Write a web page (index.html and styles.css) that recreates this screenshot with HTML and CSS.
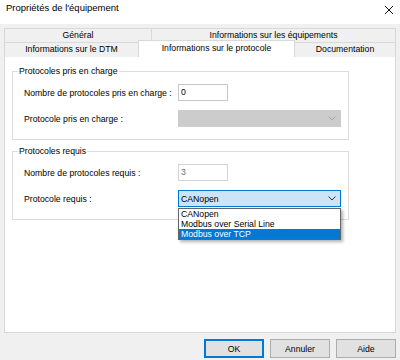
FILE: index.html
```
<!DOCTYPE html>
<html lang="fr">

<head>
  <meta charset="UTF-8">
  <meta name="viewport" content="width=device-width, initial-scale=1.0">
  <title>Propriétés de l'équipement</title>
  <link rel="stylesheet" href="styles.css">
</head>

<body>
  <div class="window">
    <div class="titlebar">
      <span class="title">Propriétés de l'équipement</span>
      <svg class="close" width="10" height="10" viewBox="0 0 10 10">
        <path d="M1 1L9 9M9 1L1 9" stroke="#111" stroke-width="1" fill="none" />
      </svg>
    </div>

    <div class="client">
      <div class="tabs">
        <div class="tab-row row-back">
          <div class="tab">Général</div>
          <div class="tab">Informations sur les équipements</div>
        </div>
        <div class="tab-row row-front">
          <div class="tab">Informations sur le DTM</div>
          <div class="tab active">Informations sur le protocole</div>
          <div class="tab">Documentation</div>
        </div>
      </div>

      <div class="panel">
        <fieldset class="group">
          <legend>Protocoles pris en charge</legend>
          <div class="field">
            <label>Nombre de protocoles pris en charge :</label>
            <div class="textbox">0</div>
          </div>
          <div class="field">
            <label>Protocole pris en charge :</label>
            <div class="combo disabled">
              <span></span>
              <svg class="chevron" width="8" height="5" viewBox="0 0 8 5">
                <polyline points="0.5,0.5 4,4 7.5,0.5" fill="none" stroke="#a6a6a6" stroke-width="1" />
              </svg>
            </div>
          </div>
        </fieldset>

        <fieldset class="group">
          <legend>Protocoles requis</legend>
          <div class="field">
            <label>Nombre de protocoles requis :</label>
            <div class="textbox readonly">3</div>
          </div>
          <div class="field">
            <label>Protocole requis :</label>
            <div class="combo-wrap">
              <div class="combo open">
                <span>CANopen</span>
                <svg class="chevron" width="8" height="5" viewBox="0 0 8 5">
                  <polyline points="0.5,0.5 4,4 7.5,0.5" fill="none" stroke="#333" stroke-width="1" />
                </svg>
              </div>
              <ul class="dropdown">
                <li>CANopen</li>
                <li>Modbus over Serial Line</li>
                <li class="selected">Modbus over TCP</li>
              </ul>
            </div>
          </div>
        </fieldset>
      </div>

      <div class="buttons">
        <button class="btn default">OK</button>
        <button class="btn">Annuler</button>
        <button class="btn">Aide</button>
      </div>
    </div>
  </div>
</body>

</html>
```

FILE: styles.css
```
* {
  box-sizing: border-box;
}

body {
  margin: 0;
  font-family: 'Liberation Sans', Arial, sans-serif;
  font-size: 8.7px;
  color: #000;
  background: #f0f0f0;
}

.window {
  width: 400px;
  height: 360px;
  background: #f0f0f0;
  overflow: hidden;
}

.titlebar {
  height: 24px;
  background: #fff;
  display: flex;
  justify-content: space-between;
  align-items: flex-start;
  padding: 2px 6px 0 6px;
}

.title {
  font-size: 9.5px;
  line-height: 12px;
}

.close {
  margin-top: 3px;
}

.client {
  padding: 4px 4px 0;
}

.tab-row {
  display: grid;
  height: 14px;
}

.row-back {
  grid-template-columns: 148px 1fr;
}

.row-front {
  grid-template-columns: 135px 156px 1fr;
}

.tab {
  border: 1px solid #d9d9d9;
  border-width: 1px 1px 0 0;
  background: #f0f0f0;
  text-align: center;
  line-height: 13px;
  white-space: nowrap;
}

.tab:first-child {
  border-left-width: 1px;
}

.tab.active {
  position: relative;
  z-index: 1;
  background: #fff;
  border-left-width: 1px;
  margin-left: -1px;
  margin-top: -2px;
  height: 17px;
  padding-top: 1px;
}

.panel {
  background: #fff;
  border: 1px solid #d9d9d9;
  height: 277px;
  padding: 9px 0 0 7px;
}

.group {
  width: 337px;
  margin: 0;
  border: 1px solid #dcdcdc;
  padding: 7px 5px 12px;
}

.group + .group {
  margin-top: 6px;
}

.group legend {
  padding: 0 1px;
  line-height: 11px;
}

.field {
  display: grid;
  grid-template-columns: 160px auto;
  align-items: center;
  height: 17px;
}

.field + .field {
  margin-top: 9px;
}

.field label {
  padding-left: 6px;
}

.textbox {
  width: 50px;
  height: 17px;
  border: 1px solid #c8c8c8;
  background: #fff;
  padding-left: 2px;
  line-height: 15px;
}

.textbox.readonly {
  color: #6d6d6d;
  border-color: #d4d4d4;
}

.combo-wrap {
  position: relative;
  width: 163px;
  height: 17px;
}

.combo {
  width: 163px;
  height: 17px;
  display: flex;
  align-items: center;
  justify-content: space-between;
  padding: 0 4px 0 2px;
  border: 1px solid;
}

.combo.disabled {
  background: #cccccc;
  border-color: #cccccc;
}

.combo.open {
  background: #cce4f7;
  border-color: #0078d7;
}

.dropdown {
  position: absolute;
  left: 0;
  top: 18px;
  width: 163px;
  margin: 0;
  padding: 0;
  list-style: none;
  background: #fff;
  border: 1px solid #646464;
  box-shadow: 2px 2px 3px rgba(0, 0, 0, 0.3);
  z-index: 2;
}

.dropdown li {
  height: 10px;
  line-height: 10px;
  padding-left: 2px;
}

.dropdown li.selected {
  background: #0078d7;
  color: #fff;
}

.buttons {
  display: flex;
  justify-content: flex-end;
  gap: 6px;
  margin-top: 6px;
}

.btn {
  width: 60px;
  height: 19px;
  padding: 0;
  font-family: inherit;
  font-size: 8.7px;
  color: #000;
  background: #e1e1e1;
  border: 1px solid #adadad;
}

.btn.default {
  border-color: #0078d7;
  box-shadow: inset 0 0 0 1px #0078d7;
}
```
